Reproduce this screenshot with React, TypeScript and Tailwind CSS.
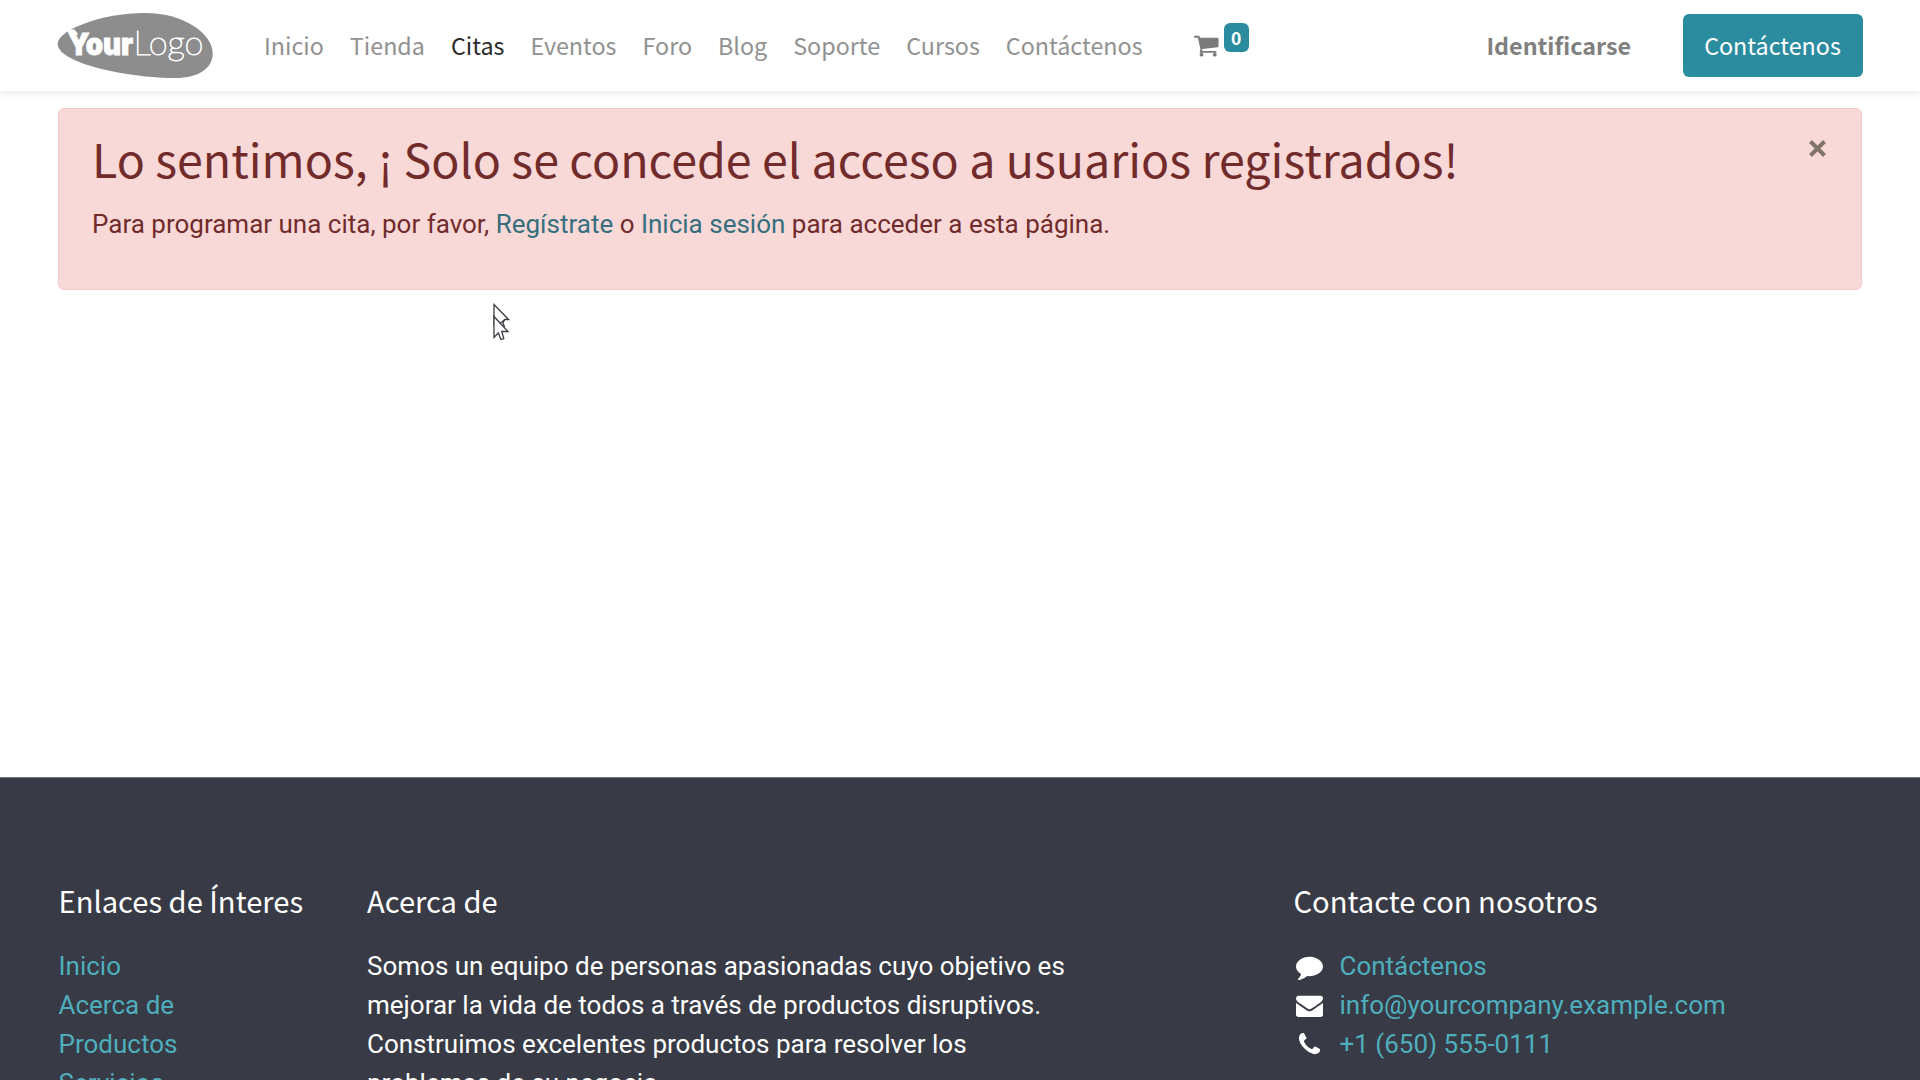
import type { ReactNode } from "react";

const NAV = ["Inicio", "Tienda", "Citas", "Eventos", "Foro", "Blog", "Soporte", "Cursos", "Contáctenos"];
const LINKS = ["Inicio", "Acerca de", "Productos", "Servicios"];

const CART =
  "M704 1536q0 52-38 90t-90 38-90-38-38-90 38-90 90-38 90 38 38 90zm896 0q0 52-38 90t-90 38-90-38-38-90 38-90 90-38 90 38 38 90zm128-1088v512q0 24-16.5 42.5t-40.5 21.5l-1044 122q13 60 13 70 0 16-24 64h920q26 0 45 19t19 45-19 45-45 19h-1024q-26 0-45-19t-19-45q0-11 8-31.5t16-36 21.5-40 15.5-29.5l-177-823h-204q-26 0-45-19t-19-45 19-45 45-19h256q16 0 28.5 6.5t19.5 15.5 13 24.5 8 26 5.5 29.5 4.5 26h1201q26 0 45 19t19 45z";
const COMMENT =
  "M1792 896q0 174-120 321.5t-326 233-450 85.5q-70 0-145-8-198 175-460 242-49 14-114 22-17 2-30.5-9t-17.5-29v-1q-3-4-.5-12t2-10 4.5-9.5l6-9 7-8.5 8-9q7-8 31-34.5t34.5-38 31-39.5 32.5-51 27-59 26-76q-157-89-247.5-220t-90.5-281q0-130 71-248.5t191-204.5 286-136.5 348-50.5q244 0 450 85.5t326 233 120 321.5z";
const ENVELOPE =
  "M1792 710v794q0 66-47 113t-113 47h-1472q-66 0-113-47t-47-113v-794q44 49 101 87 362 246 497 345 57 42 92.5 65.5t94.5 48 110 24.5h2q51 0 110-24.5t94.5-48 92.5-65.5q170-123 498-345 57-39 100-87zm0-294q0 79-49 151t-122 123q-376 261-468 325-10 7-42.5 31t-54 38.5-52 32.5-57.5 27-50 9h-2q-23 0-50-9t-57.5-27-52-32.5-54-38.5-42.5-31q-91-64-262-182.5t-205-142.5q-62-42-117-115.5t-55-136.5q0-78 41.5-130t118.5-52h1472q65 0 112.5 47t47.5 113z";
const PHONE =
  "M1600 1240q0 27-10 70.5t-21 68.5q-21 50-122 106-94 51-186 51-27 0-53-3.5t-57.5-12.5-47-14.5-55.5-20.5-49-18q-98-35-175-83-127-79-264-216t-216-264q-48-77-83-175-3-9-18-49t-20.5-55.5-14.5-47-12.5-57.5-3.5-53q0-92 51-186 56-101 106-122 25-11 68.5-21t70.5-10q14 0 21 3 18 6 53 76 11 19 30 54t35 63.5 31 53.5q3 4 17.5 25t21.5 35.5 7 28.5q0 20-28.5 50t-62 55-62 53-28.5 46q0 9 5 22.5t8.5 20.5 14 24 11.5 19q76 137 174 235t235 174q2 1 19 11.5t24 14 20.5 8.5 22.5 5q18 0 46-28.5t53-62 55-62 50-28.5q14 0 28.5 7t35.5 21.5 25 17.5q25 15 53.5 31t63.5 35 54 30q70 35 76 53 3 7 3 21z";

function Icon({ d, className }: { d: string; className: string }) {
  return (
    <svg viewBox="0 0 1792 1792" fill="currentColor" className={className}>
      <path d={d} />
    </svg>
  );
}

function Logo() {
  return (
    <svg viewBox="0 0 160 70" className="h-[70px] w-[160px] shrink-0">
      <path
        d="M.7 33C2 20 44 3 88 3c40 0 67 21 67.700 40C156 58 142 68 118 68C75 68-1 54 .7 33z"
        fill="#8d8d8d"
      />
      <path d="M8.500 19.500h9l4 5h-8z" fill="#fff" />
      <text x="11" y="45" textLength="65" lengthAdjust="spacingAndGlyphs" fill="#fff" stroke="#fff" strokeWidth=".9" fontFamily="Inter, sans-serif" fontWeight="900" fontSize="30">
        Your
      </text>
      <text x="76.500" y="45" textLength="70" lengthAdjust="spacingAndGlyphs" fill="#fff" stroke="#fff" strokeWidth="1" fontFamily="Lato, sans-serif" fontWeight="100" fontSize="33.500">
        Logo
      </text>
    </svg>
  );
}

function Cursor() {
  return (
    <svg viewBox="0 0 18 38" className="absolute left-[492px] top-[303px] h-[38px] w-[18px]" fill="#fff" stroke="#3c3c44" strokeWidth="1.300">
      <path d="M2 1.500V22l8-3 3-2.500h3.500z" />
      <path d="M2 13.500V34.500l4.300-4.500 2.700 6.500 2.800-1-2-7H16z" />
      <path d="M12.500 16.500L11 20l1.500 4" fill="none" />
    </svg>
  );
}

function Contact({ icon, children }: { icon: ReactNode; children: ReactNode }) {
  return (
    <li className="flex">
      <span className="flex w-[46px] items-start">{icon}</span>
      <a className="text-[#4eaebd]">{children}</a>
    </li>
  );
}

const HEADING = "font-['Noto_Sans_CJK_SC',sans-serif] text-[29.150px] leading-[36px] text-white";

export default function App() {
  return (
    <div className="relative flex h-[1080px] w-[1920px] flex-col overflow-hidden bg-white font-[Roboto,sans-serif] text-[26px] leading-[39px]">
      <header className="flex h-[91px] shrink-0 items-start bg-white pl-[57px] pr-[57.500px] pt-[10px] font-['Noto_Sans_CJK_SC',sans-serif] text-[23.300px] leading-[36px] text-[#919191] shadow-[0_3px_7px_rgba(0,0,0,0.08)]">
        <Logo />
        <nav className="ml-[47px] mt-[17px] flex gap-[26px]">
          {NAV.map((item) => (
            <a key={item} className={item === "Citas" ? "text-[#2b2b2b]" : ""}>
              {item}
            </a>
          ))}
        </nav>
        <div className="ml-[50.500px] flex">
          <Icon d={CART} className="mt-[22px] size-[26.500px] text-[#7a7a7a]" />
          <span className="ml-[4px] mt-[13px] flex h-[29px] w-[25px] items-center justify-center rounded-[6px] bg-[#2c8c9f] pt-px text-[17.500px] font-bold leading-[28px] text-white">
            0
          </span>
        </div>
        <a className="ml-auto mt-[17px] font-bold text-[#808080]">Identificarse</a>
        <a className="ml-[51.500px] mt-[4px] flex h-[63px] w-[180px] justify-center rounded-[6px] bg-[#2c8c9f] pt-[13px] text-white">
          Contáctenos
        </a>
      </header>

      <main className="h-[686px] shrink-0 pl-[57.500px] pr-[58px] pt-[17px]">
        <div className="flex h-[182px] justify-between rounded-[6px] border border-[#f8caca] bg-[#f9d9d8] pl-[33.500px] pr-[35.500px] text-[#722b2b]">
          <div>
            <h1 className="pt-[18px] font-['Noto_Sans_CJK_SC',sans-serif] text-[46.550px] leading-[62px]">
              Lo sentimos, ¡ Solo se concede el acceso a usuarios registrados!
            </h1>
            <p className="pt-[16px]">
              Para programar una cita, por favor, <a className="text-[#356f7e]">Regístrate</a> o{" "}
              <a className="text-[#356f7e]">Inicia sesión</a> para acceder a esta página.
            </p>
          </div>
          <svg viewBox="0 0 17 17" className="mt-[30.500px] size-[17px]" stroke="#81756a" strokeWidth="4">
            <path d="M1.500 1.500l14 14M15.500 1.500l-14 14" />
          </svg>
        </div>
      </main>

      <footer className="flex grow border-t border-[#777983] bg-[#383b45] px-[58.500px] pt-[104px] text-white">
        <section className="w-[308.500px] shrink-0">
          <h5 className={HEADING}>Enlaces de Ínteres</h5>
          <ul className="mt-[28.500px] text-[#4eaebd]">
            {LINKS.map((l) => (
              <li key={l}>{l}</li>
            ))}
          </ul>
        </section>
        <section className="w-[926.500px] shrink-0">
          <h5 className={HEADING}>Acerca de</h5>
          <p className="mt-[28.500px] w-[720px]">
            Somos un equipo de personas apasionadas cuyo objetivo es mejorar la vida de todos a través de productos
            disruptivos. Construimos excelentes productos para resolver los problemas de su negocio.
          </p>
        </section>
        <section>
          <h5 className={HEADING}>Contacte con nosotros</h5>
          <ul className="mt-[28.500px]">
            <Contact icon={<Icon d={COMMENT} className="ml-[2.500px] mt-[6px] size-[27px]" />}>Contáctenos</Contact>
            <Contact icon={<Icon d={ENVELOPE} className="ml-[2.500px] mt-[6px] size-[27px]" />}>
              info@yourcompany.example.com
            </Contact>
            <Contact icon={<Icon d={PHONE} className="ml-[2.500px] mt-[6px] size-[27px]" />}>+1 (650) 555-0111</Contact>
          </ul>
        </section>
      </footer>

      <Cursor />
    </div>
  );
}
